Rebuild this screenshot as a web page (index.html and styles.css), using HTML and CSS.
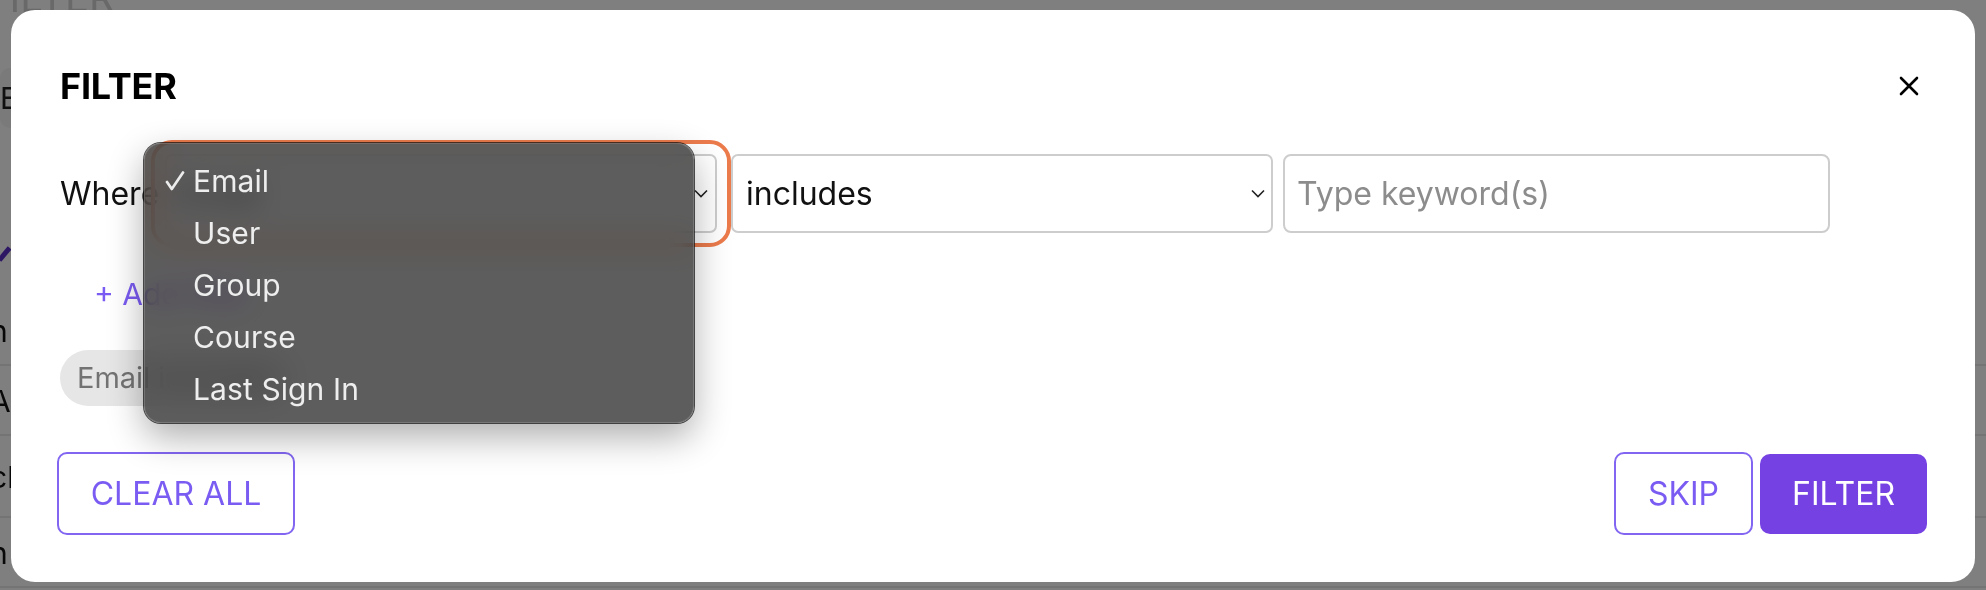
FILE: index.html
```html
<!DOCTYPE html>
<html lang="en">
<head>
<meta charset="utf-8">
<title>Filter</title>
<link rel="stylesheet" href="styles.css">
</head>
<body>
<div class="page" aria-hidden="true">
  <div class="page-title">FILTER</div>
  <div class="page-tab">E</div>
  <div class="page-icon"></div>
  <div class="page-rows">
    <div class="page-row">n</div>
    <div class="page-row">A</div>
    <div class="page-row tall">ch</div>
    <div class="page-row">n</div>
  </div>
</div>
<div class="overlay"></div>

<div class="modal" role="dialog" aria-label="Filter">
  <div class="modal-header">
    <h2 class="modal-title">FILTER</h2>
    <button class="close-btn" aria-label="Close">
      <svg width="20" height="20" viewBox="0 0 20 20"><path d="M2 2 L18 18 M18 2 L2 18" stroke="#000" stroke-width="2.6" stroke-linecap="round"/></svg>
    </button>
  </div>

  <div class="filter-row">
    <span class="where">Where</span>
    <div class="select field-select">
      <span class="select-value">Email</span>
      <svg class="chev" width="14" height="9" viewBox="0 0 14 9"><polyline points="1,1.5 7,7.5 13,1.5" fill="none" stroke="#222" stroke-width="1.6"/></svg>
      <div class="menu">
        <div class="menu-item"><span class="check"><svg width="20" height="20" viewBox="0 0 20 20"><path d="M2 11 L6.8 18 L18 1.5" fill="none" stroke="#ececec" stroke-width="2.7" stroke-linecap="round" stroke-linejoin="round"/></svg></span>Email</div>
        <div class="menu-item"><span class="check"></span>User</div>
        <div class="menu-item"><span class="check"></span>Group</div>
        <div class="menu-item"><span class="check"></span>Course</div>
        <div class="menu-item"><span class="check"></span>Last Sign In</div>
      </div>
    </div>
    <div class="select op-select">
      <span class="select-value">includes</span>
      <svg class="chev" width="14" height="9" viewBox="0 0 14 9"><polyline points="1,1.5 7,7.5 13,1.5" fill="none" stroke="#222" stroke-width="1.6"/></svg>
    </div>
    <div class="keyword"><span class="placeholder">Type keyword(s)</span></div>
  </div>

  <div class="add-filter">+ Add filter</div>

  <div class="chip-row"><span class="chip">Email includes</span></div>

  <div class="actions">
    <button class="btn btn-outline btn-clear">CLEAR ALL</button>
    <div class="actions-right">
      <button class="btn btn-outline btn-skip">SKIP</button>
      <button class="btn btn-fill">FILTER</button>
    </div>
  </div>
</div>
</body>
</html>
```

FILE: styles.css
```css
* { box-sizing: border-box; }

html, body {
  margin: 0;
  padding: 0;
  width: 1986px;
  height: 590px;
  overflow: hidden;
  background: #ffffff;
  font-family: Inter, "Noto Sans", "Liberation Sans", sans-serif;
}

/* underlying page (dimmed by overlay) */
.page {
  width: 1986px;
  height: 590px;
  color: #222;
}
.page-title {
  font-size: 40px;
  font-weight: 400;
  color: #d2d2d2;
  margin: -22px 0 0 -14px;
  height: 40px;
  line-height: 40px;
}
.page-tab {
  margin-top: 50px;
  width: 60px;
  height: 60px;
  background: #f4f4f4;
  border-radius: 10px;
  font-size: 30px;
  line-height: 60px;
  color: #222;
}
.page-icon {
  margin: 118px 0 0 2px;
  width: 5px;
  height: 16px;
  background: #5b2fc9;
  transform: rotate(40deg);
}
.page-rows {
  margin-top: 34px;
}
.page-row {
  height: 70px;
  border-bottom: 2px solid #e8e8e8;
  font-size: 30px;
  line-height: 70px;
  margin-left: -10px;
  color: #111;
}
.page-row.tall { height: 82px; line-height: 82px; }

.overlay {
  position: fixed;
  inset: 0;
  background: rgba(0, 0, 0, 0.5);
}

/* modal */
.modal {
  position: fixed;
  left: 11px;
  top: 10px;
  width: 1964px;
  height: 572px;
  background: #ffffff;
  border-radius: 24px;
  padding: 54px 48px 47px 49px;
  display: flex;
  flex-direction: column;
  color: #1a1a1a;
}

.modal-header {
  display: flex;
  align-items: center;
  justify-content: space-between;
  height: 44px;
}
.modal-title {
  margin: 0;
  font-size: 36px;
  line-height: 44px;
  font-weight: 700;
  color: #000;
  letter-spacing: -0.2px;
}
.close-btn {
  width: 20px;
  height: 20px;
  padding: 0;
  margin-right: 8px;
  border: 0;
  background: none;
  display: flex;
}

/* filter row */
.filter-row {
  margin-top: 46px;
  height: 79px;
  display: flex;
  align-items: center;
  gap: 10px;
}
.where {
  width: 95px;
  flex-shrink: 0;
  font-size: 32px;
  color: #111;
}
.select {
  position: relative;
  height: 79px;
  border: 2px solid #cdcdcd;
  border-radius: 7px;
  display: flex;
  align-items: center;
  justify-content: space-between;
  font-size: 32px;
  color: #111;
  background: #fff;
  flex-shrink: 0;
}
.field-select {
  width: 552px;
  margin-right: 4px;
  padding: 0 7px 0 13px;
  outline: 4px solid #ec7b4c;
  outline-offset: 10px;
}
.op-select {
  width: 542px;
  padding: 0 6px 0 13px;
}
.chev { display: block; }
.keyword {
  width: 547px;
  height: 79px;
  border: 2px solid #cdcdcd;
  border-radius: 8px;
  display: flex;
  align-items: center;
  padding-left: 12px;
  font-size: 32px;
  flex-shrink: 0;
}
.placeholder { color: #8c8c8c; }

/* native-like dropdown menu */
.menu {
  position: absolute;
  left: -23px;
  top: -13px;
  width: 550px;
  height: 280px;
  padding: 12px 0 8px;
  border-radius: 17px;
  background: rgba(52, 52, 52, 0.8);
  -webkit-backdrop-filter: blur(14px) saturate(2.2);
  backdrop-filter: blur(14px) saturate(2.2);
  box-shadow:
    0 0 0 1px rgba(20, 20, 20, 0.75),
    inset 0 0 0 1px rgba(255, 255, 255, 0.16),
    0 14px 36px rgba(0, 0, 0, 0.32);
  z-index: 5;
}
.menu-item {
  height: 52px;
  display: flex;
  align-items: center;
  padding-left: 21px;
  font-size: 30px;
  color: #eeeeee;
  letter-spacing: 0.1px;
}
.check {
  width: 28px;
  height: 52px;
  display: flex;
  align-items: center;
  flex-shrink: 0;
}

.add-filter {
  margin-top: 41px;
  height: 40px;
  line-height: 40px;
  padding-left: 34px;
  font-size: 30px;
  color: #7b5cf3;
}

.chip-row {
  margin-top: 36px;
  height: 56px;
  display: flex;
}
.chip {
  height: 56px;
  line-height: 56px;
  padding: 0 22px 0 17px;
  border-radius: 28px;
  background: #e6e6e6;
  color: #737373;
  font-size: 29px;
}

.actions {
  margin-top: 46px;
  height: 83px;
  display: flex;
  align-items: center;
  justify-content: space-between;
}
.actions-right {
  display: flex;
  align-items: center;
  gap: 7px;
}
.btn {
  font-family: Inter, "Noto Sans", "Liberation Sans", sans-serif;
  font-size: 32px;
  font-weight: 400;
  border-radius: 10px;
  padding: 0;
  cursor: pointer;
}
.btn-outline {
  height: 83px;
  background: #fff;
  border: 2px solid #8266f2;
  color: #7b5cf3;
}
.btn-clear {
  width: 238px;
  margin-left: -3px;
}
.btn-skip { width: 139px; }
.btn-fill {
  width: 167px;
  height: 80px;
  border: 0;
  background: #7541e2;
  color: #fff;
}
```
